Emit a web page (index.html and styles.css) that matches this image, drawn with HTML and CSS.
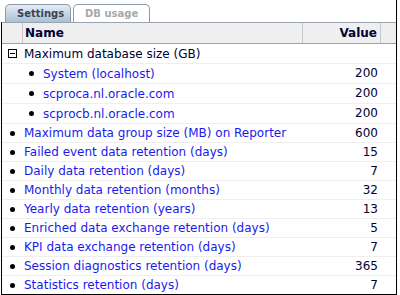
FILE: index.html
```html
<!DOCTYPE html>
<html>
<head>
<meta charset="utf-8">
<link rel="stylesheet" href="styles.css">
</head>
<body>
<div class="panel">
  <div class="tabs">
    <div class="tab active">Settings</div>
    <div class="tab">DB usage</div>
  </div>
  <div class="grid">
    <div class="head">
      <div class="c0"></div>
      <div class="cname">Name</div>
      <div class="cval">Value</div>
      <div class="csb"></div>
    </div>
    <div class="row top">
      <div class="c0"><span class="toggle"></span></div>
      <div class="cname plain">Maximum database size (GB)</div>
      <div class="cval"></div>
    </div>
    <div class="row child">
      <div class="c0"></div>
      <div class="cname"><span class="dot"></span>System (localhost)</div>
      <div class="cval">200</div>
    </div>
    <div class="row child">
      <div class="c0"></div>
      <div class="cname"><span class="dot"></span>scproca.nl.oracle.com</div>
      <div class="cval">200</div>
    </div>
    <div class="row child">
      <div class="c0"></div>
      <div class="cname"><span class="dot"></span>scprocb.nl.oracle.com</div>
      <div class="cval">200</div>
    </div>
    <div class="row">
      <div class="c0"><span class="dot"></span></div>
      <div class="cname">Maximum data group size (MB) on Reporter</div>
      <div class="cval">600</div>
    </div>
    <div class="row">
      <div class="c0"><span class="dot"></span></div>
      <div class="cname">Failed event data retention (days)</div>
      <div class="cval">15</div>
    </div>
    <div class="row">
      <div class="c0"><span class="dot"></span></div>
      <div class="cname">Daily data retention (days)</div>
      <div class="cval">7</div>
    </div>
    <div class="row">
      <div class="c0"><span class="dot"></span></div>
      <div class="cname">Monthly data retention (months)</div>
      <div class="cval">32</div>
    </div>
    <div class="row">
      <div class="c0"><span class="dot"></span></div>
      <div class="cname">Yearly data retention (years)</div>
      <div class="cval">13</div>
    </div>
    <div class="row">
      <div class="c0"><span class="dot"></span></div>
      <div class="cname">Enriched data exchange retention (days)</div>
      <div class="cval">5</div>
    </div>
    <div class="row">
      <div class="c0"><span class="dot"></span></div>
      <div class="cname">KPI data exchange retention (days)</div>
      <div class="cval">7</div>
    </div>
    <div class="row">
      <div class="c0"><span class="dot"></span></div>
      <div class="cname">Session diagnostics retention (days)</div>
      <div class="cval">365</div>
    </div>
    <div class="row last">
      <div class="c0"><span class="dot"></span></div>
      <div class="cname">Statistics retention (days)</div>
      <div class="cval">7</div>
    </div>
  </div>
</div>
</body>
</html>
```
FILE: styles.css
```css
html, body {
  margin: 0;
  padding: 0;
  background: #ffffff;
}
body {
  width: 400px;
  height: 295px;
  overflow: hidden;
  font-family: "DejaVu Sans", Verdana, sans-serif;
  font-size: 12px;
}
.panel {
  width: 396px;
  margin-left: 1px;
}
.tabs {
  display: flex;
  gap: 2px;
  padding: 4px 0 0 4px;
  height: 18px;
  border-right: 1px solid #000;
}
.tab {
  box-sizing: border-box;
  height: 18px;
  padding: 0 11px;
  border: 1px solid #8a9aa8;
  border-bottom: none;
  border-radius: 5px 5px 0 0;
  font-size: 10px;
  font-weight: bold;
  line-height: 17px;
  color: #a8a8a8;
  background: #fff;
}
.tab.active {
  color: #3a4450;
  background: linear-gradient(#e4edf5, #a9c0d6);
  width: 66px;
}
.grid {
  border-left: 1px solid #000;
  border-right: 1px solid #000;
  border-bottom: 1px solid #000;
}
.head {
  display: flex;
  height: 20px;
  background: #efefef;
  border-top: 1px solid #9aa4ae;
  border-bottom: 1px solid #9aa4ae;
  font-weight: bold;
  color: #000033;
  line-height: 20px;
}
.head .c0 {
  border-right: 1px solid #c4c8cc;
}
.head .cname {
  border-right: 1px solid #c4c8cc;
  padding-left: 2px;
  width: 280px;
}
.head .cval {
  border-right: 1px solid #c4c8cc;
}
.c0 {
  width: 20px;
  flex: none;
  display: flex;
  align-items: center;
  justify-content: center;
}
.cname {
  width: 280px;
  flex: none;
  padding-left: 2px;
  box-sizing: border-box;
  white-space: nowrap;
  display: flex;
  align-items: center;
}
.cval {
  width: 78px;
  flex: none;
  box-sizing: border-box;
  text-align: right;
  padding-right: 3px;
}
.csb {
  flex: 1;
}
.row {
  display: flex;
  height: 19px;
  line-height: 18px;
  border-bottom: 1px solid #efefef;
  color: #1a1aee;
  box-sizing: border-box;
}
.row.top, .row.child {
  height: 20px;
}
.row.last {
  border-bottom: none;
  height: 18px;
}
.row .cval {
  color: #000033;
  width: 79px;
}
.plain {
  color: #000033;
}
.child .cname {
  padding-left: 0;
}
.dot {
  display: inline-block;
  width: 5px;
  height: 5px;
  border-radius: 50%;
  background: #000;
}
.child .dot {
  margin: 0 9px 0 7px;
}
.toggle {
  display: inline-block;
  width: 9px;
  height: 9px;
  box-sizing: border-box;
  border: 1px solid #000;
  position: relative;
}
.toggle::after {
  content: "";
  position: absolute;
  left: 1px;
  right: 1px;
  top: 3px;
  height: 1px;
  background: #000;
}
```
